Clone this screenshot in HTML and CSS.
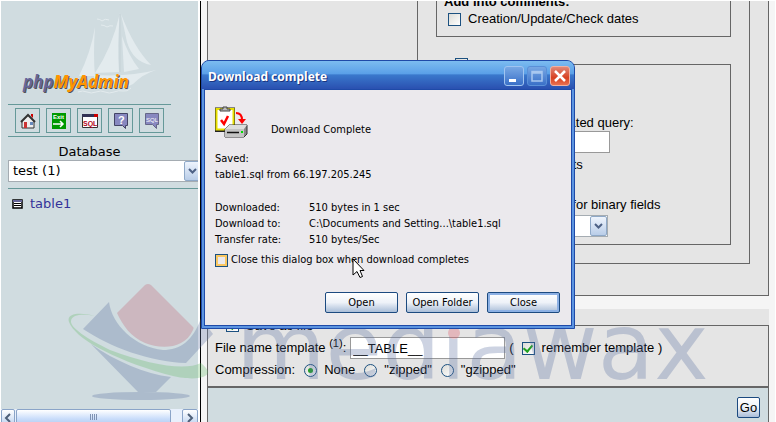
FILE: index.html
```html
<!DOCTYPE html>
<html lang="en">
<head>
  <meta charset="UTF-8" />
  <meta name="viewport" content="width=device-width, initial-scale=1.0" />
  <title>phpMyAdmin</title>
  <link rel="stylesheet" href="styles.css">
</head>
<body>
  <div class="frames">
    <nav class="sidebar">
      <div class="sidebar-body">
        <svg class="logo" width="163" height="103" viewBox="8 1 163 103">
          <g fill="#e3ebee">
            <path d="M95 27 Q93 55 95 76 L79 76 Q91 52 95 27Z" />
            <path d="M120 13 Q117 45 119 72 L95 73 Q112 48 120 13Z" />
            <path d="M122 36 Q128 55 139 69 L124 72Z" />
            <path d="M121 14 Q134 48 151 65 Q133 62 127 42Z" />
            <path d="M94 75 Q130 77 156 70 Q143 74 133 84 Q125 89 110 88 L94 84Z" />
          </g>
          <path d="M120 14 V72" stroke="#c5d1d6" />
          <path d="M97 19 q3 0 5 2 q3 -3 7 -1 M101 25 q3 0 6 2 q3 -2 6 -1 M78 92 q5 -2 9 0 t9 0 t9 0 t9 0 t9 -1 t8 -3" fill="none" stroke="#e3ebee" />
          <text class="logo-shadow" x="24" y="89">phpMyAdmin</text>
          <text class="logo-text" x="23" y="88"><tspan fill="#666699">php</tspan><tspan fill="#ff9500">MyAdmin</tspan></text>
        </svg>
        <div class="icons">
          <a class="icon" href="#" aria-label="Home"><svg width="16" height="16"><path d="M2 8 L8 2 L14 8 V15 H2Z" fill="#eee" stroke="#333" /><path d="M1 9 L8 2 L15 9" fill="none" stroke="#333" stroke-width="2" /><path d="M11 1 H13 V5 L11 3Z" fill="#c00" /><path d="M4 9 H7 V15 H4Z" fill="#c33" /><path d="M10 9 H13 V12 H10Z" fill="#6688bb" /></svg></a>
          <a class="icon" href="#" aria-label="Exit"><svg width="16" height="16"><path d="M1 0 H15 V16 H1Z" fill="#090" /><text x="2" y="6" class="icon-exit">Exit</text><path d="M2 11 H12 M9 8 L12 11 L9 14" fill="none" stroke="#fff" stroke-width="1.5" /></svg></a>
          <a class="icon" href="#" aria-label="Query window"><svg width="16" height="16"><path d="M.5 1.5 H15.5 V14.5 H.5Z" fill="#fff" stroke="#333" /><path d="M0 1 H12 V4 H0Z" fill="#335" /><path d="M12 1 H16 V4 H12Z" fill="#c00" /><text x="1" y="13" class="icon-sql">SQL</text></svg></a>
          <a class="icon" href="#" aria-label="Documentation"><svg width="16" height="16"><path d="M1.500 .5 H14.500 V12.500 H12.500 V15.500 L9.500 12.500 H1.500Z" fill="#8888c0" stroke="#446" /><text x="5" y="11" class="icon-help">?</text></svg></a>
          <a class="icon" href="#" aria-label="SQL help"><svg width="16" height="16"><path d="M1.500 .5 H14.500 V11.500 H12.500 V15.500 L8.500 11.500 H1.500Z" fill="#8888c0" stroke="#668" /><text x="2" y="9" class="icon-help-sql">SQL</text></svg></a>
        </div>
        <label class="db-label" for="db">Database</label>
        <div class="combo db-combo">
          <select id="db"><option>test (1)</option></select>
          <span class="combo-arrow"><svg width="9" height="6"><path d="M1 1 L4.500 4.500 L8 1" /></svg></span>
        </div>
        <div class="tables">
          <svg width="11" height="10"><path d="M1 1 H10 V9 H1Z" fill="#fff" stroke="#000" stroke-width="1.500" /><path d="M1 1 H10 V3 H1Z" fill="#669" /><path d="M2 4.500 H9 M2 6.500 H9" stroke="#000" /></svg>
          <a href="#">table1</a>
        </div>
      </div>
      <div class="scrollbar">
        <span class="scroll-btn scroll-left"><svg width="8" height="10"><path d="M6 1 L2 5 L6 9" /></svg></span>
        <span class="thumb"><i></i><i></i><i></i><i></i></span>
        <span class="scroll-btn scroll-right"><svg width="8" height="10"><path d="M2 1 L6 5 L2 9" /></svg></span>
      </div>
    </nav>

    <main class="content">
      <div class="export">
        <div class="options">
          <div class="comments">
            <div class="comments-title"><b>Add into comments:</b></div>
            <label class="check-row"><input type="checkbox">Creation/Update/Check dates</label>
          </div>
          <fieldset class="data">
            <legend><input type="checkbox" checked aria-label="Data"></legend>
            <label class="row" for="maxlen">Maximal length of created query:</label>
            <input class="text maxlen" id="maxlen" type="text">
            <div class="row ignore">Use ignore inserts</div>
            <label class="check-row"><input type="checkbox" checked>Use hexadecimal for binary fields</label>
            <div class="combo type-combo">
              <select aria-label="Export type"><option></option></select>
              <span class="combo-arrow"><svg width="9" height="6"><path d="M1 1 L4.500 4.500 L8 1" /></svg></span>
            </div>
          </fieldset>
        </div>
      </div>
      <div class="save">
        <fieldset class="save-box">
          <legend><label class="check-row"><input type="checkbox" checked>Save as file</label></legend>
          <div class="line template">
            <label for="tpl">File name template <sup>(1)</sup>:</label>
            <input class="text tpl" id="tpl" type="text" value="__TABLE__">
            <span>(</span>
            <label class="check-row"><input type="checkbox" checked>remember template )</label>
          </div>
          <div class="line compression">
            <span>Compression:</span>
            <label class="check-row"><input type="radio" name="zip" checked>None</label>
            <label class="check-row"><input type="radio" name="zip">"zipped"</label>
            <label class="check-row"><input type="radio" name="zip">"gzipped"</label>
          </div>
        </fieldset>
      </div>
      <div class="footer"><button class="btn go">Go</button></div>
    </main>
  </div>

  <svg class="watermark" width="700" height="130" viewBox="60 280 700 130">
    <path fill="#c36475" d="M145 285 Q148 283 151 285 L193 327 Q194 328 193 330 C184 350 160 349 145 343 C131 337 123 326 117 313Z" />
    <path fill="#5b71a1" d="M109 302 L83 329 C110 347 150 362 186 363 L213 334 L201 318 C193 341 180 350 163 350 C135 347 112 325 109 302Z" />
    <path fill="#5b71a1" d="M91 344 C115 361 145 374 171 377 L156 392 L138 392Z" />
    <ellipse fill="#5b71a1" cx="141" cy="396" rx="49" ry="4" />
    <path fill="#65bb68" d="M95 316 C80 312 66 313 69 322 C75 338 110 358 165 374 C190 381 205 379 208 373 Q209 370 201 363 C185 371 150 365 110 350 C85 338 70 327 71 321 C72 314 84 314 95 316Z" />
    <text class="watermark-text" x="236" y="379">mediawax</text>
    <circle fill="#e05060" cx="454" cy="333" r="6" />
  </svg>

  <section class="dialog" role="dialog" aria-labelledby="dialog-title">
    <header class="titlebar">
      <span id="dialog-title">Download complete</span>
      <button class="win-btn" aria-label="Minimize"><svg width="18" height="18"><path d="M4 12 H11 V15 H4Z" fill="#fff" /></svg></button>
      <button class="win-btn maximize" aria-label="Maximize"><svg width="18" height="18"><path d="M4 4.500 H14 V14 H4Z M4 6 H14" fill="none" stroke="#a9c8f0" stroke-width="1.500" /></svg></button>
      <button class="win-btn close" aria-label="Close window"><svg width="18" height="18"><path d="M4 4 L14 14 M14 4 L4 14" stroke="#fff" stroke-width="2.500" /></svg></button>
    </header>
    <div class="dialog-body">
      <div class="status">
        <svg width="33" height="33" viewBox="0 0 33 33">
          <path d="M1.500 3 H18.500 V24.500 H1.500Z" fill="#fff" stroke="#222" stroke-width="3" />
          <path d="M1.500 3 H18.500 V23.500 H1.500Z" fill="#fff" stroke="#e8e000" stroke-width="2" />
          <path d="M5 5 V3 H8 V1 H12 V3 H15 V5Z" fill="#bbb" stroke="#444" />
          <path d="M6 14 L9 18 L13 10" fill="none" stroke="#f00" stroke-width="2.500" />
          <path d="M21 7 Q27 7 27 14" fill="none" stroke="#f00" stroke-width="2" />
          <path d="M23 13 H31 L27 18Z" fill="#f00" />
          <path d="M10 23 L14 19 H32 V28 L29 31 H10Z" fill="#888" stroke="#333" />
          <path d="M10 23 L14 19 H32 L29 23Z" fill="#ddd" />
          <path d="M10 23 H29 V31 H10Z" fill="#c4c4c4" />
          <path d="M12 26.500 H24" stroke="#111" stroke-width="1.500" />
          <path d="M26 25 H28 V27 H26Z" fill="#0d0" />
        </svg>
        <span>Download Complete</span>
      </div>
      <p class="saved">Saved:<br>table1.sql from 66.197.205.245</p>
      <dl class="info">
        <dt>Downloaded:</dt><dd>510 bytes in 1 sec</dd>
        <dt>Download to:</dt><dd>C:\Documents and Setting...\table1.sql</dd>
        <dt>Transfer rate:</dt><dd>510 bytes/Sec</dd>
      </dl>
      <label class="auto-close"><input type="checkbox">Close this dialog box when download completes</label>
      <div class="buttons">
        <button class="btn">Open</button>
        <button class="btn">Open Folder</button>
        <button class="btn default">Close</button>
      </div>
    </div>
  </section>

  <svg class="cursor" width="13" height="21"><path d="M1 1 V17 L5 13.500 L8 19.500 L10.500 18.500 L8 12.500 H12Z" fill="#fff" stroke="#000" /></svg>
</body>
</html>
```
FILE: styles.css
```css
* {
  box-sizing: border-box;
}
body {
  margin: 0;
  background: #fff;
  color: #000;
  font: 13px/16px 'Liberation Sans', Arial, sans-serif;
  overflow: hidden;
}
.frames {
  display: flex;
  height: 100vh;
  padding: 1px 1px 0 1px;
}

/* left frame */
.sidebar {
  display: flex;
  flex-direction: column;
  width: 197px;
  flex-shrink: 0;
  background: #d0dce0;
  font-family: 'DejaVu Sans', Verdana, sans-serif;
}
.sidebar-body {
  flex: 1;
  padding-left: 7px;
  overflow: hidden;
}
.logo {
  display: block;
}
.logo-text,
.logo-shadow {
  font: italic bold 17px 'Open Sans', sans-serif;
}
.logo-shadow {
  fill: #555;
}
.icons {
  display: flex;
  gap: 6px;
  width: 163px;
  padding: 3px 0 3px 7px;
  border-top: 1px solid #669999;
  border-bottom: 1px solid #669999;
}
.icon {
  display: flex;
  align-items: center;
  justify-content: center;
  width: 25px;
  height: 25px;
  border: 1px solid #669999;
}
.icon-exit {
  font: bold 6px 'Liberation Sans', sans-serif;
  fill: #fff;
}
.icon-sql {
  font: bold 7px 'Liberation Sans', sans-serif;
  fill: #b00020;
}
.icon-help {
  font: bold 11px 'Liberation Sans', sans-serif;
  fill: #fff;
}
.icon-help-sql {
  font: 6px 'Liberation Sans', sans-serif;
  fill: #fff;
}
.db-label {
  display: block;
  width: 163px;
  padding-top: 7px;
  text-align: center;
}
.combo {
  display: flex;
  height: 22px;
  background: #fff;
  border: 1px solid #a5acb2;
}
.combo select {
  flex: 1;
  appearance: none;
  border: 0;
  padding: 0 4px;
  background: #fff;
  color: #000;
  font: inherit;
}
.combo-arrow {
  display: flex;
  align-items: center;
  justify-content: center;
  width: 17px;
  border: 1px solid #8fa9c8;
  border-radius: 2px;
  background: linear-gradient(#eef4fd, #b9cde8);
  pointer-events: none;
}
.combo-arrow path {
  fill: none;
  stroke: #4d6185;
  stroke-width: 2;
}
.db-combo {
  margin-right: -4px;
}
.tables {
  display: flex;
  align-items: center;
  gap: 7px;
  margin-top: 6px;
  padding: 7px 0 0 4px;
  border-top: 1px solid #669999;
}
.tables a {
  color: #333399;
  text-decoration: none;
}
.scrollbar {
  display: flex;
  height: 13px;
  background: #e8f0fc;
  overflow: hidden;
}
.scroll-btn {
  display: flex;
  align-items: center;
  justify-content: center;
  width: 16px;
  height: 17px;
  border: 1px solid #8aa4c8;
  border-radius: 2px;
  background: linear-gradient(#fff, #bdd2f0);
}
.scroll-left {
  width: 14px;
}
.scroll-right {
  margin-left: auto;
}
.scroll-btn path {
  fill: none;
  stroke: #4d5f78;
  stroke-width: 2;
}
.thumb {
  display: flex;
  gap: 1px;
  justify-content: center;
  width: 155px;
  height: 17px;
  margin-left: 1px;
  padding-top: 4px;
  border: 1px solid #8aa4c8;
  border-radius: 2px;
  background: linear-gradient(#fff, #c8dcfa 60%, #b4ccf0);
}
.thumb i {
  width: 1px;
  height: 6px;
  background: #7f93b4;
}

/* right frame */
.content {
  flex: 1;
  display: flex;
  flex-direction: column;
  margin-left: 2px;
  padding: 0 6px;
  border-left: 1px solid #000;
  background: #f5f5f5;
}
.export {
  padding: 0 18px 31px 209px;
  border: 1px solid #666;
  border-top: 0;
  background: #e5e5e5;
}
.options {
  padding: 0 18px 18px;
  border: 1px solid #666;
  border-top: 0;
}
.comments {
  padding: 0 0 9px 7px;
  border: 1px solid #666;
  border-top: 0;
}
.comments-title {
  display: flex;
  align-items: flex-end;
  height: 8px;
  margin-bottom: 2px;
  line-height: 14px;
  overflow: hidden;
}
fieldset {
  margin: 0;
  min-width: 0;
  border: 1px solid #666;
}
legend {
  display: flex;
  height: 13px;
  padding: 0;
}
.data {
  margin-top: 21px;
  padding: 44px 8px 7px;
}
.data legend {
  margin-left: 10px;
}
.row {
  display: block;
  height: 16px;
}
.ignore {
  margin: 4px 0 24px 33px;
}
.type-combo {
  width: 163px;
  margin-top: 2px;
}
.check-row {
  display: flex;
  align-items: center;
  gap: 7px;
}
input[type="checkbox"],
input[type="radio"] {
  appearance: none;
  flex-shrink: 0;
  display: grid;
  place-content: center;
  width: 13px;
  height: 13px;
  margin: 0 0 0 4px;
  border: 1px solid #1c5180;
  background: linear-gradient(135deg, #dcdcd7, #fff);
}
.save-box input,
.save-box input[type="radio"],
.save-box input[type="checkbox"],
legend input[type="checkbox"] {
  margin: 0;
}
input[type="checkbox"]:checked::before {
  content: "";
  width: 4px;
  height: 7px;
  border: solid #21a121;
  border-width: 0 2px 2px 0;
  transform: translateY(-1px) rotate(40deg);
}
input[type="radio"] {
  border-radius: 50%;
}
input[type="radio"]:checked::before {
  content: "";
  width: 5px;
  height: 5px;
  border-radius: 50%;
  background: #21a121;
}
.text {
  display: block;
  height: 22px;
  padding: 0 2px;
  border: 1px solid #999;
  background: #fff;
  font: inherit;
}
.maxlen {
  width: 165px;
}
.save {
  margin-top: 13px;
  padding-top: 10px;
  background: #e5e5e5;
}
.save-box {
  padding: 5px 7px 8px;
  border-bottom-width: 2px;
}
.save-box legend {
  margin-left: 11px;
}
.line {
  display: flex;
  align-items: center;
}
.template {
  gap: 4px;
}
.template .check-row {
  margin-left: 4px;
}
.tpl {
  width: 155px;
}
sup {
  font-size: 11px;
  line-height: 0;
}
.compression {
  gap: 9px;
  margin-top: 3px;
}
.footer {
  flex: 1;
  padding: 9px 8px 0;
  border: solid #666;
  border-width: 0 1px;
  background: #d0dce0;
  text-align: right;
}
.btn {
  height: 21px;
  padding: 0;
  border: 1px solid #1c4a80;
  border-radius: 2px;
  background: linear-gradient(#fff, #eef2f8 50%, #a9bdd8);
  color: #000;
  font: inherit;
}
.go {
  width: 23px;
}

/* watermark */
.watermark {
  position: absolute;
  left: 60px;
  top: 280px;
  opacity: .3;
  pointer-events: none;
}
.watermark-text {
  font: 92px 'DejaVu Sans', sans-serif;
  fill: #5b71a1;
}

/* download dialog */
.dialog {
  position: absolute;
  left: 201px;
  top: 60px;
  width: 374px;
  border: 1px solid #1f4aa8;
  border-radius: 8px 8px 0 0;
  background: #5c94e0;
  font-family: 'DejaVu Sans Condensed', Tahoma, sans-serif;
  font-size: 11px;
}
.titlebar {
  display: flex;
  align-items: center;
  gap: 3px;
  height: 28px;
  padding: 2px 4px 0 6px;
  border-radius: 7px 7px 0 0;
  background: linear-gradient(#7cbcf0, #5ba0e8 45%, #3a78cc 50%, #2a50b0);
  color: #fff;
  font: bold 12px 'Noto Sans', sans-serif;
  text-shadow: 1px 1px #1a3580;
}
.titlebar span {
  flex: 1;
}
.win-btn {
  width: 20px;
  height: 20px;
  padding: 0;
  border: 1px solid #a0c4f0;
  border-radius: 3px;
  background: linear-gradient(#78a8e4, #3a70c8);
}
.win-btn svg {
  display: block;
}
.maximize {
  border-color: #5a90d8;
}
.close {
  border-color: #f0b0a0;
  background: linear-gradient(#e08878, #d84020 60%, #e87050);
}
.dialog-body {
  margin: 0 2px 2px;
  padding: 16px 11px 12px 10px;
  border: 1px solid #1f4aa8;
  background: #ebe9ed;
}
.status {
  display: flex;
  align-items: flex-end;
  gap: 23px;
}
.status span {
  padding-bottom: 1px;
}
.saved {
  margin: 12px 0 17px;
}
.info {
  display: grid;
  grid-template-columns: 94px 1fr;
  margin: 0 0 4px;
}
.info dd {
  margin: 0;
}
.auto-close {
  display: flex;
  align-items: center;
  gap: 3px;
}
.auto-close input[type="checkbox"] {
  margin: 0;
  border: 1px solid #1c5180;
  background: #ebe9ed;
  box-shadow: inset 0 0 0 2px #fac761;
}
.buttons {
  display: flex;
  justify-content: flex-end;
  gap: 8px;
  margin-top: 24px;
}
.buttons .btn {
  width: 73px;
}
.btn.default {
  box-shadow: inset 0 0 0 2px #8cb0e4;
}
.cursor {
  position: absolute;
  left: 352px;
  top: 258px;
}
```
